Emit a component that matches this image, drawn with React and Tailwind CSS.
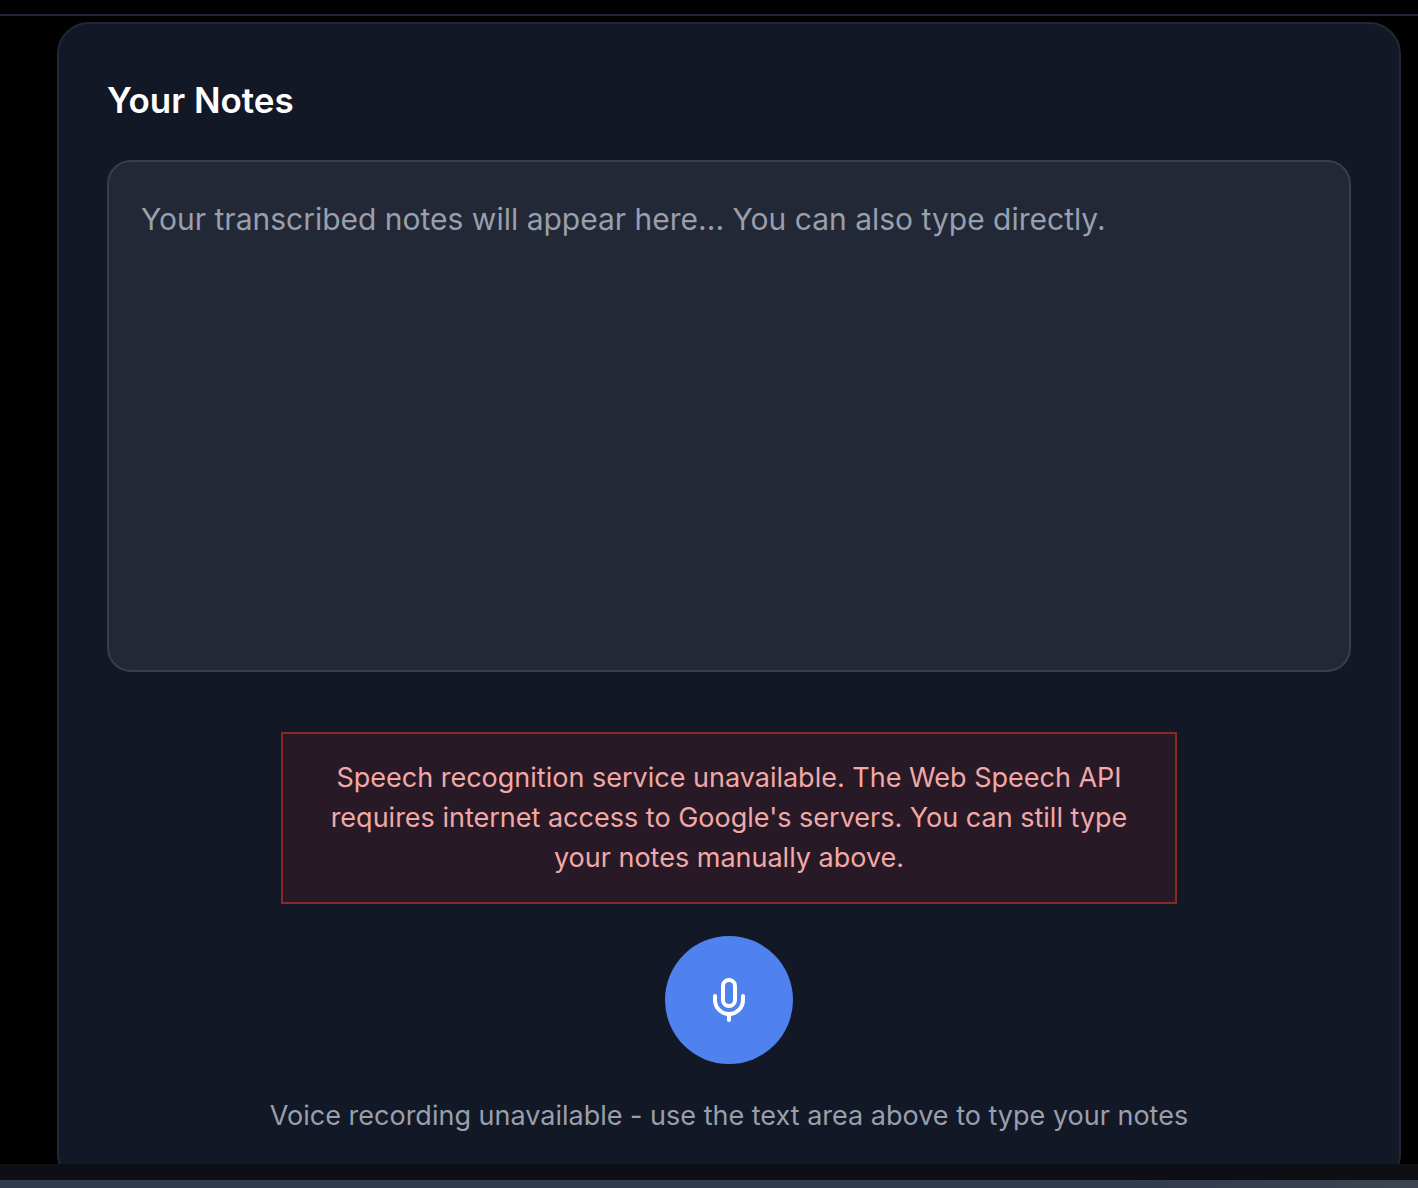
export default function App() {
  return (
    <div className="flex h-screen flex-col overflow-hidden bg-black font-['Inter','Liberation_Sans',sans-serif]">
      <div className="h-4 shrink-0 border-b-2 border-[#1f2734]" />
      <main className="flex-1 overflow-hidden pt-1.5 pr-[17px] pl-[57px]">
        <section className="rounded-[32px] border-2 border-[#202835] bg-[#121825] p-12">
          <h2 className="text-[35px] leading-[56px] font-semibold text-white">
            <label htmlFor="notes">Your Notes</label>
          </h2>
          <textarea
            id="notes"
            placeholder="Your transcribed notes will appear here... You can also type directly."
            className="mt-8 block h-[512px] w-full resize-none rounded-3xl border-2 border-[#383e4b] bg-[#222835] p-8 text-[30px] leading-[50px] text-white placeholder:text-[#999fad]"
          />
          <div className="mt-15 flex flex-col items-center">
            <p role="alert" className="max-w-[896px] border-2 border-[#8a2922] bg-[#271a26] px-8 py-6 text-center text-[27px] leading-10 text-[#f2a8a7]">
              Speech recognition service unavailable. The Web Speech API requires internet access to Google's servers. You can still type your notes manually above.
            </p>
            <button type="button" aria-label="Record voice note" className="mt-8 flex size-32 items-center justify-center rounded-full bg-[#4f82ee] text-white">
              <svg viewBox="0 0 24 24" className="size-12" fill="none" stroke="currentColor" strokeWidth="2" strokeLinecap="round" strokeLinejoin="round">
                <path d="M12 19v3" />
                <path d="M19 10v2a7 7 0 0 1-14 0v-2" />
                <rect x="9" y="2" width="6" height="13" rx="3" />
              </svg>
            </button>
            <p className="mt-8 text-[27px] leading-10 text-[#999fad]">
              Voice recording unavailable - use the text area above to type your notes
            </p>
          </div>
        </section>
      </main>
      <div className="h-4 shrink-0 bg-[#0e0f14]" />
      <div className="h-2 shrink-0 bg-linear-to-r from-[#303b4e] from-80% to-[#3d4450]" />
    </div>
  );
}
